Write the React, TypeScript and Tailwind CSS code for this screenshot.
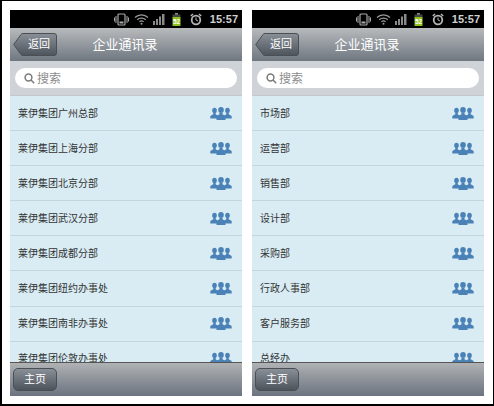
const left = ["莱伊集团广州总部", "莱伊集团上海分部", "莱伊集团北京分部", "莱伊集团武汉分部", "莱伊集团成都分部", "莱伊集团纽约办事处", "莱伊集团南非办事处", "莱伊集团伦敦办事处"];
const right = ["市场部", "运营部", "销售部", "设计部", "采购部", "行政人事部", "客户服务部", "总经办"];

function GroupIcon() {
  return (
    <svg width="22" height="13" viewBox="0 0 22 13" fill="#4a82b8" className="shrink-0">
      <ellipse cx="4.500" cy="3.400" rx="2.300" ry="2.700" />
      <ellipse cx="17.500" cy="3.400" rx="2.300" ry="2.700" />
      <path d="M3.300 6h2.400v1.200L8 8.800v2.700H0.300V9.400c0-.6 1-1.200 3-2.200z" />
      <path d="M16.300 6h2.400v1.200c2 1 3 1.600 3 2.200v2.100H14V8.800l2.300-1.600z" />
      <ellipse cx="11" cy="2.900" rx="2.800" ry="2.900" />
      <path d="M9.500 5.500h3v1.700l3 1.900v3.900h-9V9.100l3-1.900z" />
    </svg>
  );
}

function StatusBar() {
  return (
    <div className="h-[18px] bg-black flex items-center justify-end pr-[4px] shrink-0">
      <svg width="15" height="13" viewBox="0 0 15 13" fill="none" stroke="#a8a8a8">
        <rect x="4" y="1" width="7" height="11" rx="1" strokeWidth="1.200" />
        <rect x="5.500" y="8.500" width="4" height="2" fill="#a8a8a8" stroke="none" />
        <path d="M2 3v7M0.500 4.500v4M13 3v7M14.500 4.500v4" strokeWidth="1" />
      </svg>
      <svg width="15" height="12" viewBox="0 0 15 12" fill="none" stroke="#9a9a9a" strokeWidth="1.200" className="ml-[5px]">
        <path d="M1 4.500c3.500-3.600 9.500-3.600 13 0M3.200 6.700c2.300-2.200 6.300-2.200 8.600 0M5.400 8.700c1.200-1 3-1 4.200 0" />
        <circle cx="7.500" cy="10.700" r="1" fill="#9a9a9a" stroke="none" />
      </svg>
      <svg width="12" height="11" viewBox="0 0 12 11" fill="#8a8a8a" className="ml-[4px]">
        <rect x="0" y="7" width="2" height="4" />
        <rect x="3" y="5" width="2" height="6" />
        <rect x="6" y="2.500" width="2" height="8.500" />
        <rect x="9" y="0" width="2.500" height="11" />
      </svg>
      <svg width="9" height="13" viewBox="0 0 9 13" className="ml-[7px]">
        <rect x="3" y="0" width="3" height="2" fill="#8a8a8a" />
        <rect x="0.500" y="1.500" width="8" height="3" fill="#444" />
        <rect x="0.500" y="4" width="8" height="9" fill="#8cc21a" />
        <text x="4.500" y="11" fontSize="6.500" fontWeight="700" fill="#fff" textAnchor="middle" fontFamily="Liberation Sans, sans-serif">52</text>
      </svg>
      <svg width="12" height="13" viewBox="0 0 12 13" fill="none" stroke="#b5b5b5" className="ml-[9px]">
        <circle cx="6" cy="7" r="4.300" strokeWidth="1.800" />
        <path d="M6 4.500V7l2 1" strokeWidth="1" />
        <path d="M0.800 3 3 1M11.200 3 9 1" strokeWidth="1.600" />
      </svg>
      <span className="text-[11px] leading-[18px] font-bold text-[#d0d0d0] ml-[8px]">15:57</span>
    </div>
  );
}

function Phone({ items }: { items: string[] }) {
  return (
    <div className="w-[232px] h-[386px] flex flex-col overflow-hidden relative bg-[#d9ecf3]">
      <StatusBar />
      <div className="h-[33px] shrink-0 bg-gradient-to-b from-[#b8bbbd] to-[#6f7780] flex items-center relative">
        <div className="ml-[3px] flex items-center h-[23px] w-[44px] relative">
          <svg width="44" height="23" viewBox="0 0 44 23" className="absolute inset-0">
            <defs>
              <linearGradient id="bk" x1="0" y1="0" x2="0" y2="1">
                <stop offset="0" stopColor="#8a9098" />
                <stop offset="1" stopColor="#4e545c" />
              </linearGradient>
            </defs>
            <path d="M.7 11.500 8 1.500Q8.700.5 10 .5h31q2.500 0 2.500 2.500v17q0 2.500-2.500 2.500H10q-1.300 0-2-1z" fill="url(#bk)" stroke="#4a4f55" />
          </svg>
          <span className="relative text-[11px] text-white w-full pl-[15px] leading-[23px]">返回</span>
        </div>
        <span className="absolute inset-x-0 text-center text-[13px] text-white leading-[33px] pr-[2px]">企业通讯录</span>
      </div>
      <div className="h-[35px] shrink-0 bg-[#cfd3d7] border-b border-[#c4c8cc] flex items-start pt-[7px] px-[5px]">
        <div className="w-[222px] h-[20px] rounded-full bg-white flex items-center pl-[9px] gap-[2px]">
          <svg width="11" height="11" viewBox="0 0 11 11" fill="none" stroke="#7b7b7b" strokeWidth="1.500">
            <circle cx="4.500" cy="4.500" r="3.400" />
            <path d="m7 7 3.200 3.200" />
          </svg>
          <span className="text-[12px] text-[#8c8c8c] leading-[20px] pt-[1px]">搜索</span>
        </div>
      </div>
      <div className="flex-1 min-h-0 overflow-hidden">
        {items.map((name) => (
          <div key={name} className="h-[35.100px] border-b border-[#c3d6de] flex items-center justify-between pl-[8px] pr-[10px]">
            <span className="text-[10px] text-[#333333]">{name}</span>
            <GroupIcon />
          </div>
        ))}
      </div>
      <div className="h-[34px] shrink-0 bg-gradient-to-b from-[#b0b2b4] to-[#6c7480] border-t border-[#555] flex items-center pl-[3px]">
        <div className="w-[44px] h-[23px] rounded-[5px] bg-gradient-to-b from-[#8a9098] to-[#4e545c] border border-[#4a4f55] text-center text-[11px] text-white leading-[21px]">主页</div>
      </div>
    </div>
  );
}

export default function App() {
  return (
    <div className="w-[494px] h-[406px] bg-white border-l-2 border-t border-b-2 border-r border-black flex gap-[10px] pl-[8px] pt-[9px] overflow-hidden font-['Liberation_Sans','Noto_Sans_CJK_SC',sans-serif]">
      <Phone items={left} />
      <Phone items={right} />
    </div>
  );
}
